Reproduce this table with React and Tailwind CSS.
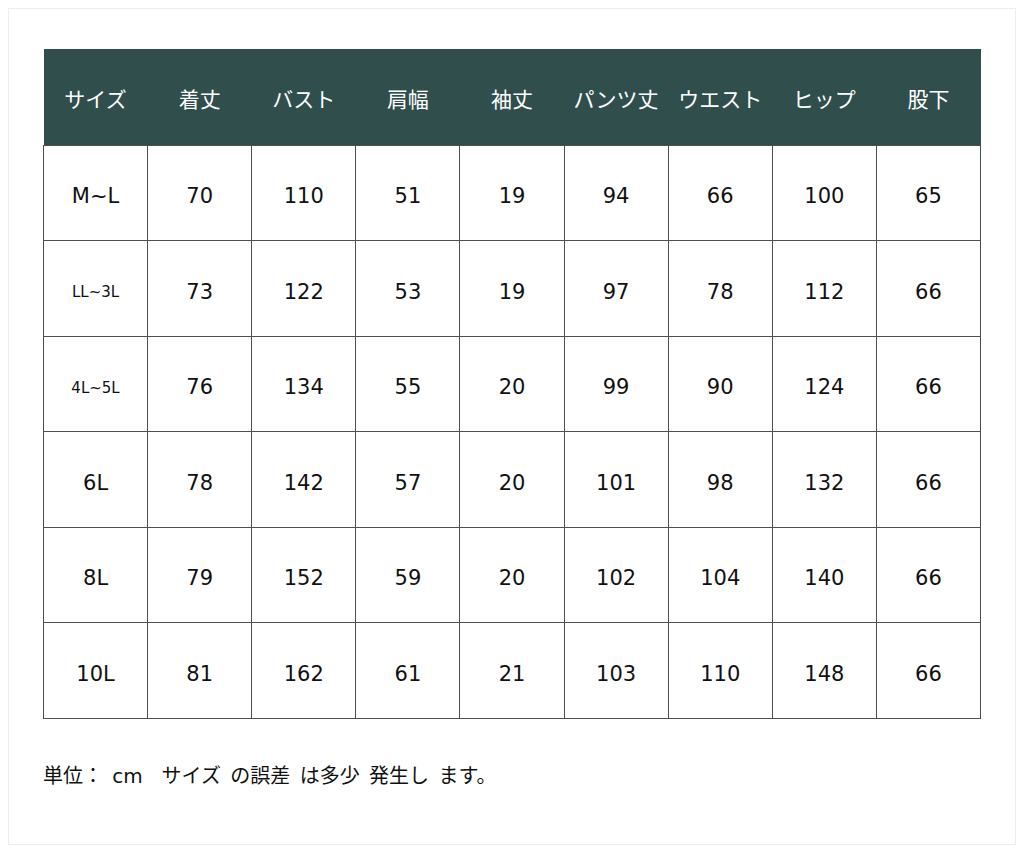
import React from 'react';

const headers = ['サイズ', '着丈', 'バスト', '肩幅', '袖丈', 'パンツ丈', 'ウエスト', 'ヒップ', '股下'];

const rows = [
  ['M~L', '70', '110', '51', '19', '94', '66', '100', '65'],
  ['LL~3L', '73', '122', '53', '19', '97', '78', '112', '66'],
  ['4L~5L', '76', '134', '55', '20', '99', '90', '124', '66'],
  ['6L', '78', '142', '57', '20', '101', '98', '132', '66'],
  ['8L', '79', '152', '59', '20', '102', '104', '140', '66'],
  ['10L', '81', '162', '61', '21', '103', '110', '148', '66'],
];

const font = { fontFamily: '"DejaVu Sans", "Noto Sans CJK JP", sans-serif' };

const App = () => {
  return (
    <div className="w-[1024px] h-[853px] bg-white p-2" style={font}>
      <div className="h-[837px] w-[1008px] border border-[#ececec] pt-[40px] pl-[34px]">
        {/* Size table */}
        <table className="table-fixed border-collapse w-[938px]">
          <thead>
            <tr className="h-[96px] bg-[#2f4e4c]">
              {headers.map((h) => (
                <th
                  key={h}
                  className="font-normal text-white text-[21px] text-center whitespace-nowrap px-0 pt-2"
                >
                  {h}
                </th>
              ))}
            </tr>
          </thead>
          <tbody>
            {rows.map((row) => (
              <tr key={row[0]} className="h-[95.5px]">
                {row.map((cell, i) => (
                  <td
                    key={i}
                    className={`border border-[#4a504f] text-center text-[#111] pt-2 ${
                      i === 0 && cell.length > 3 ? 'text-[15px]' : 'text-[21px]'
                    }`}
                  >
                    {cell}
                  </td>
                ))}
              </tr>
            ))}
          </tbody>
        </table>

        {/* Note */}
        <p className="mt-[42px] text-[20px] text-[#111] whitespace-pre [word-spacing:3px]">
          単位： cm  サイズ の誤差 は多少 発生し ます。
        </p>
      </div>
    </div>
  );
};

export default App;
